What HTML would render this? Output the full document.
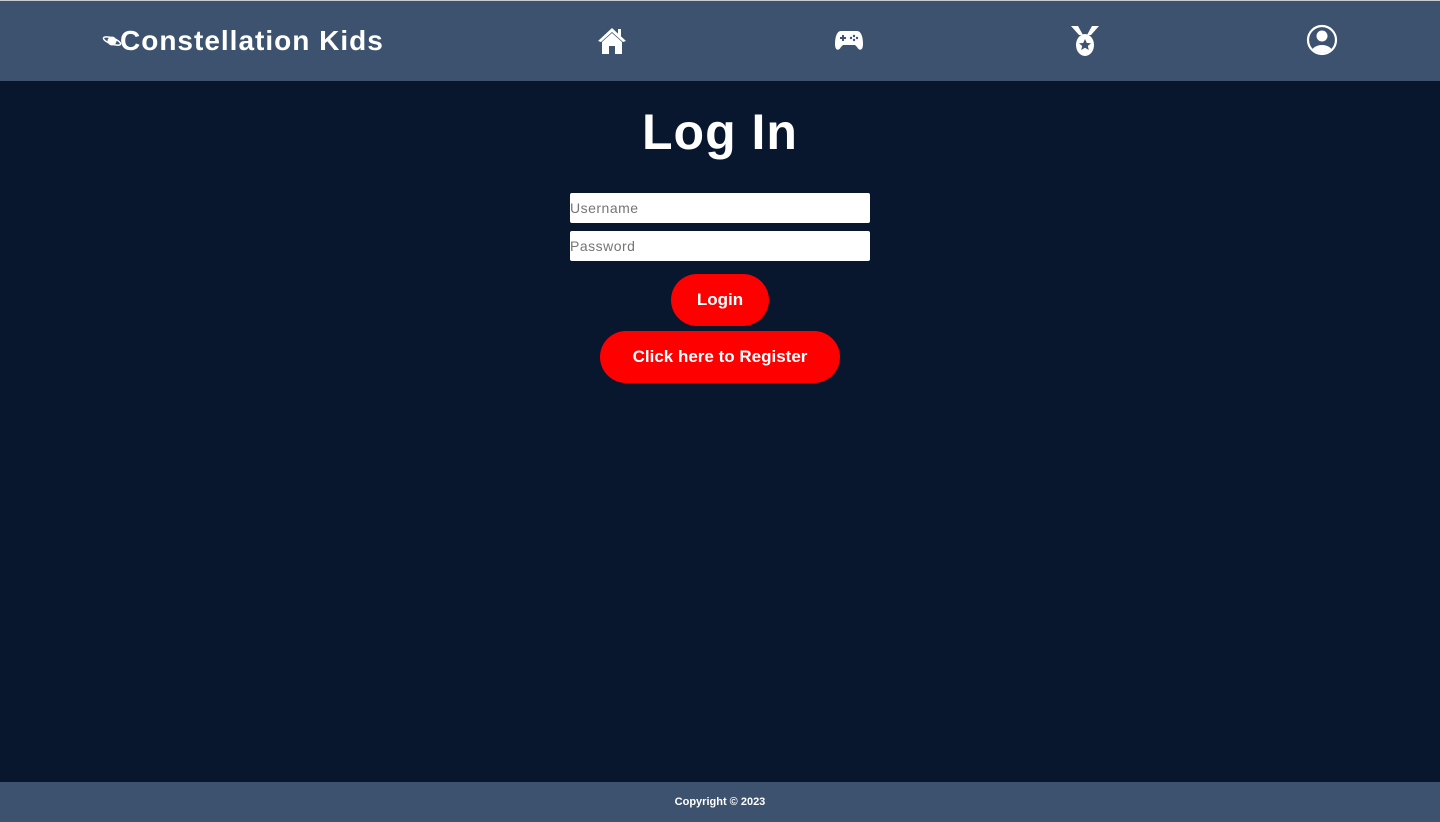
<!DOCTYPE html>
<html><head><style>
*{margin:0;padding:0;box-sizing:border-box}
body{width:1440px;height:822px;background:#08162e;font-family:"Liberation Sans",sans-serif;color:#fff;position:relative;overflow:hidden}
.hdr{position:absolute;top:0;left:0;width:1440px;height:81px;background:#3c526f;border-top:1px solid #c8ccd2}
.logo{position:absolute;left:102px;top:24px;font-size:28px;letter-spacing:1px;white-space:nowrap;font-weight:bold}
.ic{position:absolute;top:24px}
h1{position:absolute;top:103px;width:100%;text-align:center;font-size:50px;font-weight:bold;letter-spacing:1px}
input{position:absolute;left:570px;width:300px;height:30px;border:none;border-radius:2px;background:#fff;font-size:14px;padding:0;color:#555;font-family:inherit;letter-spacing:0.5px}
.btn{position:absolute;background:#ff0000;border-radius:26px;height:52px;text-align:center;line-height:52px;font-size:17px;font-weight:bold}
.ftr{position:absolute;left:0;top:782px;width:1440px;height:40px;background:#3c526f;text-align:center;line-height:40px;font-size:11px;font-weight:bold}
</style></head><body>
<div class="hdr">
<div class="logo"><svg width="20" height="14" viewBox="0 0 20 14" style="vertical-align:2px;margin-right:-2px"><ellipse cx="10" cy="7" rx="9" ry="3" fill="none" stroke="#fff" stroke-width="1.5" transform="rotate(20 10 7)"/><circle cx="10" cy="7" r="4.5" fill="#fff"/></svg>Constellation Kids</div>
<svg class="ic" style="left:597px" width="30" height="30" viewBox="0 0 30 30"><path d="M15 3 L1 16 L4 17 L15 7 L26 17 L29 16 Z" fill="#fff"/><rect x="21" y="4" width="3" height="7" fill="#fff"/><path d="M5 17 L15 8 L25 17 V29 H18 V21 H12 V29 H5 Z" fill="#fff"/></svg>
<svg class="ic" style="left:834px;top:28px" width="30" height="24" viewBox="0 0 30 24"><path d="M7 2 H23 C27 2 29 8 29 15 C29 22 25 22 23 18 L21 16 H9 L7 18 C5 22 1 22 1 15 C1 8 3 2 7 2 Z" fill="#fff"/><rect x="6" y="8" width="6" height="2" fill="#3c526f"/><rect x="8" y="6" width="2" height="6" fill="#3c526f"/><circle cx="20" cy="7" r="1.2" fill="#3c526f"/><circle cx="23" cy="9" r="1.2" fill="#3c526f"/><circle cx="20" cy="11" r="1.2" fill="#3c526f"/><circle cx="17" cy="9" r="1.2" fill="#3c526f"/></svg>
<svg class="ic" style="left:1070px;top:24px" width="30" height="32" viewBox="0 0 30 32"><path d="M1 1 H8 L13 10 H9 Z M29 1 H22 L17 10 H21 Z" fill="#fff"/><ellipse cx="15" cy="20" rx="9" ry="11" fill="#fff"/><path d="M15 14 L16.8 18 L21 18.3 L17.8 21 L18.8 25 L15 22.8 L11.2 25 L12.2 21 L9 18.3 L13.2 18 Z" fill="#3c526f"/></svg>
<svg class="ic" style="left:1306px;top:23px" width="32" height="32" viewBox="0 0 32 32"><defs><clipPath id="c"><circle cx="16" cy="16" r="13"/></clipPath></defs><circle cx="16" cy="16" r="14" fill="none" stroke="#fff" stroke-width="2.2"/><g clip-path="url(#c)" fill="#fff"><circle cx="16" cy="12" r="5.5"/><ellipse cx="16" cy="29" rx="11" ry="8"/></g></svg>
</div>
<h1>Log In</h1>
<input style="top:193px" placeholder="Username">
<input style="top:231px" placeholder="Password">
<div class="btn" style="left:671px;top:274px;width:98px">Login</div>
<div class="btn" style="left:600px;top:331px;width:240px">Click here to Register</div>
<div class="ftr">Copyright © 2023</div>
</body></html>
